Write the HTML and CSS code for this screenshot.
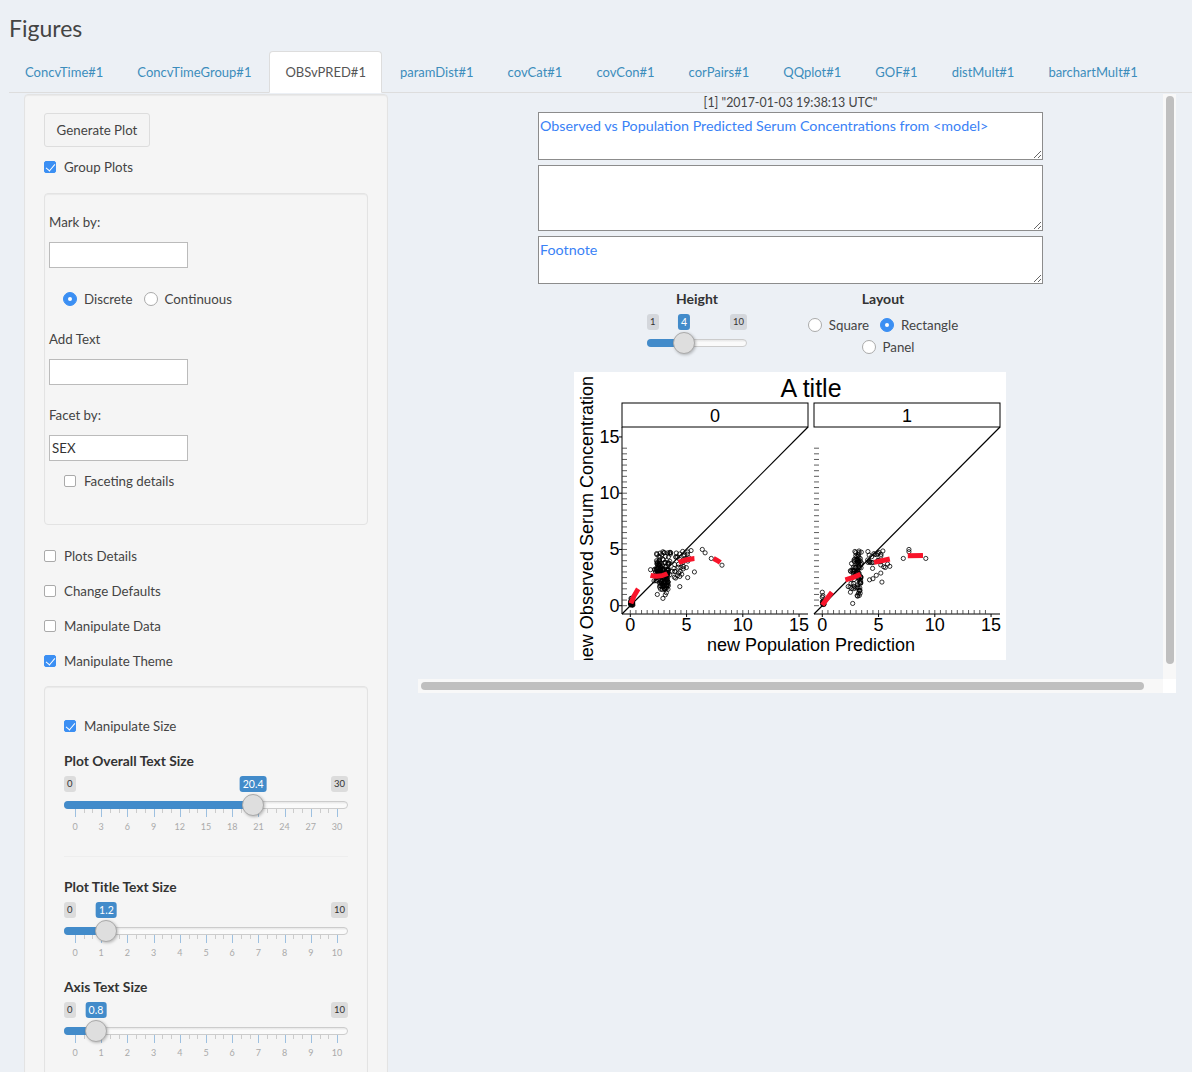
FILE: index.html
```html
<!DOCTYPE html>
<html lang="en">
<head>
    <meta charset="utf-8" />
    <meta name="viewport" content="width=device-width, initial-scale=1.0" />
    <title>Figures</title>
    <link rel="stylesheet" href="styles.css">
</head>
<body>
    <div class="page">
        <h2 class="page-title">Figures</h2>

        <ul class="nav-tabs">
            <li><a href="#">ConcvTime#1</a></li>
            <li><a href="#">ConcvTimeGroup#1</a></li>
            <li class="active"><a href="#">OBSvPRED#1</a></li>
            <li><a href="#">paramDist#1</a></li>
            <li><a href="#">covCat#1</a></li>
            <li><a href="#">covCon#1</a></li>
            <li><a href="#">corPairs#1</a></li>
            <li><a href="#">QQplot#1</a></li>
            <li><a href="#">GOF#1</a></li>
            <li><a href="#">distMult#1</a></li>
            <li><a href="#">barchartMult#1</a></li>
        </ul>

        <div class="tab-content">
            <div class="well sidebar">
                <button class="btn">Generate Plot</button>
                <label class="check group-plots"><input type="checkbox" checked> Group Plots</label>

                <div class="well options-well">
                    <label class="field-label">Mark by:</label>
                    <input class="text-input" type="text">
                    <div class="radio-row mark-type">
                        <label class="check"><input type="radio" name="mark" checked> Discrete</label>
                        <label class="check"><input type="radio" name="mark"> Continuous</label>
                    </div>
                    <label class="field-label add-text">Add Text</label>
                    <input class="text-input" type="text">
                    <label class="field-label facet-by">Facet by:</label>
                    <input class="text-input" type="text" value="SEX">
                    <label class="check facet-details"><input type="checkbox"> Faceting details</label>
                </div>

                <label class="check"><input type="checkbox"> Plots Details</label>
                <label class="check section-check"><input type="checkbox"> Change Defaults</label>
                <label class="check section-check"><input type="checkbox"> Manipulate Data</label>
                <label class="check section-check"><input type="checkbox" checked> Manipulate Theme</label>

                <div class="well theme-well">
                    <label class="check"><input type="checkbox" checked> Manipulate Size</label>

                    <div class="slider-label first">Plot Overall Text Size</div>
                    <div class="irs with-grid" data-min="0" data-max="30" data-value="20.4" data-step="3"></div>
                    <hr class="divider">
                    <div class="slider-label">Plot Title Text Size</div>
                    <div class="irs with-grid" data-min="0" data-max="10" data-value="1.2" data-step="1"></div>
                    <div class="slider-label next">Axis Text Size</div>
                    <div class="irs with-grid" data-min="0" data-max="10" data-value="0.8" data-step="1"></div>
                </div>
            </div>

            <div class="plot-pane">
                <div class="plot-scroll">
                    <pre class="timestamp">[1] "2017-01-03 19:38:13 UTC"</pre>
                    <textarea class="caption short">Observed vs Population Predicted Serum Concentrations from &lt;model&gt;</textarea>
                    <textarea class="caption tall"></textarea>
                    <textarea class="caption short">Footnote</textarea>

                    <div class="plot-controls">
                        <div class="height-col">
                            <div class="control-title">Height</div>
                            <div class="irs" data-min="1" data-max="10" data-value="4"></div>
                        </div>
                        <div class="layout-col">
                            <div class="control-title">Layout</div>
                            <div class="radio-row layout-row">
                                <label class="check"><input type="radio" name="layout"> Square</label>
                                <label class="check"><input type="radio" name="layout" checked> Rectangle</label>
                            </div>
                            <div class="radio-row panel-row">
                                <label class="check"><input type="radio" name="layout"> Panel</label>
                            </div>
                        </div>
                    </div>

                    <svg class="plot" id="plot" width="432" height="288" viewBox="574 372 432 288">
                        <rect x="574" y="372" width="432" height="288" fill="#fff"/>
                        <text class="plot-title" x="811" y="397">A title</text>
                        <text class="axis-title" x="811" y="651">new Population Prediction</text>
                        <text class="axis-title" transform="translate(593 376) rotate(-90)" style="text-anchor:end">new Observed Serum Concentration</text>
                    </svg>
                </div>
                <div class="scroll-track vertical"><div class="scroll-thumb"></div></div>
                <div class="scroll-track horizontal"><div class="scroll-thumb"></div></div>
                <div class="scroll-corner"></div>
            </div>
        </div>
    </div>
    <script src="page.js"></script>
</body>
</html>
```

FILE: styles.css
```css
* {
    box-sizing: border-box;
}

html, body {
    margin: 0;
    padding: 0;
    height: 100%;
    overflow: hidden;
}

body {
    font-family: "Lato", "Open Sans", sans-serif;
    font-size: 13.3px;
    line-height: 20px;
    background-color: #ecf0f5;
    color: #333;
}

.page {
    height: 1072px;
    overflow: hidden;
    padding-left: 9px;
}

.page-title {
    margin: 0;
    height: 51px;
    padding-top: 14px;
    font-size: 23px;
    line-height: 28px;
    font-weight: 400;
    color: #444;
}

.nav-tabs {
    display: flex;
    list-style: none;
    margin: 0;
    padding: 0;
    height: 42px;
    border-bottom: 1px solid #ddd;
    font-size: 13px;
}

.nav-tabs li {
    margin-right: 2px;
}

.nav-tabs a {
    display: block;
    height: 42px;
    padding: 10px 15px;
    border: 1px solid transparent;
    border-radius: 4px 4px 0 0;
    color: #3c8dbc;
    text-decoration: none;
    white-space: nowrap;
}

.nav-tabs .active a {
    background-color: #fff;
    border-color: #ddd #ddd #fff;
    color: #555;
}

.tab-content {
    display: flex;
    align-items: flex-start;
    padding-left: 15px;
    margin-top: 1px;
}

.well {
    background-color: #f5f5f5;
    border: 1px solid #e3e3e3;
    border-radius: 4px;
    box-shadow: inset 0 1px 1px rgba(0, 0, 0, 0.05);
}

.sidebar {
    flex: none;
    width: 364px;
    padding: 18px 19px 19px;
    margin-right: 30px;
}

.btn {
    display: block;
    height: 34px;
    width: 106px;
    padding: 0;
    border: 1px solid #ddd;
    border-radius: 3px;
    background-color: #f4f4f4;
    color: #444;
    font-family: inherit;
    font-size: 13.3px;
}

.check {
    display: flex;
    align-items: center;
    gap: 8px;
    height: 20px;
    white-space: nowrap;
    color: #444;
}

.radio-row .check {
    gap: 7px;
}

.group-plots {
    margin-top: 10px;
}

.section-check {
    margin-top: 15px;
}

.check input {
    appearance: none;
    flex: none;
    margin: 0;
    background-color: #fff;
    border: 1px solid #aaa;
    position: relative;
}

.check input[type="checkbox"] {
    width: 12px;
    height: 12px;
    border-radius: 2px;
}

.check input[type="radio"] {
    width: 14px;
    height: 14px;
    border-radius: 50%;
}

.check input:checked {
    background-color: #3b8ff3;
    border-color: #3b8ff3;
}

.check input[type="checkbox"]:checked::after {
    content: "";
    position: absolute;
    left: 3px;
    top: 0;
    width: 4px;
    height: 8px;
    border: solid #fff;
    border-width: 0 1.5px 1.5px 0;
    transform: rotate(40deg);
}

.check input[type="radio"]:checked::after {
    content: "";
    position: absolute;
    left: 4px;
    top: 4px;
    width: 4px;
    height: 4px;
    border-radius: 50%;
    background-color: #fff;
}

.options-well {
    width: 324px;
    height: 332px;
    margin: 16px 0 21px;
    padding: 18px 4px 0;
}

.field-label {
    display: block;
    height: 20px;
    color: #444;
}

.text-input {
    display: block;
    width: 139px;
    height: 26px;
    margin-top: 10px;
    padding: 0 2px;
    border: 1px solid #bbb;
    background-color: #fff;
    color: #333;
    font-family: inherit;
    font-size: 13.3px;
}

.radio-row {
    display: flex;
}

.mark-type {
    gap: 11px;
    margin: 21px 0 0 14px;
}

.add-text {
    margin-top: 20px;
}

.facet-by {
    margin-top: 20px;
}

.facet-details {
    margin: 10px 0 0 15px;
}

.theme-well {
    width: 324px;
    height: 500px;
    margin-top: 15px;
    padding: 29px 19px 0;
}

.slider-label {
    height: 20px;
    margin-bottom: 5px;
    font-size: 13.8px;
    font-weight: 700;
    color: #333;
}

.slider-label.first {
    margin-top: 15px;
}

.slider-label.next {
    margin-top: 15px;
}

.divider {
    height: 1px;
    margin: 20px 0;
    border: 0;
    background-color: #eee;
}

/* range slider */
.irs {
    position: relative;
    height: 40px;
    font-size: 11px;
    line-height: 16px;
}

.irs.with-grid {
    height: 60px;
}

.irs-min, .irs-max, .irs-value {
    position: absolute;
    top: 0;
    height: 16px;
    padding: 0 3px;
    border-radius: 3px;
    background-color: rgba(0, 0, 0, 0.1);
    color: #333;
    font-size: 9.5px;
}

.irs-min {
    left: 0;
}

.irs-max {
    right: 0;
}

.irs-value {
    transform: translateX(-50%);
    background-color: #428bca;
    color: #fff;
    font-size: 10.5px;
}

.irs-track {
    position: absolute;
    top: 25px;
    left: 0;
    right: 0;
    height: 8px;
    border: 1px solid #ccc;
    border-radius: 8px;
    background: linear-gradient(#e6e6e6, #fafafa 40%);
}

.irs-bar {
    position: absolute;
    top: 25px;
    left: 0;
    height: 8px;
    border-radius: 8px 0 0 8px;
    background-color: #428bca;
}

.irs-handle {
    position: absolute;
    top: 18px;
    width: 22px;
    height: 22px;
    margin-left: -11px;
    border: 1px solid #aaa;
    border-radius: 50%;
    background-color: #dedede;
    box-shadow: 1px 1px 3px rgba(0, 0, 0, 0.25);
}

.irs-tick {
    position: absolute;
    top: 33px;
    width: 1px;
    height: 4px;
    background-color: #ccc;
}

.irs-tick.major {
    height: 8px;
    background-color: #9dc0e0;
}

.irs-tick-label {
    position: absolute;
    top: 44px;
    transform: translateX(-50%);
    font-size: 9px;
    line-height: 14px;
    color: #aaa;
}

/* plot pane */
.plot-pane {
    flex: none;
    display: grid;
    grid-template-columns: 745px 13px;
    grid-template-rows: 585px 14px;
}

.plot-scroll {
    display: flex;
    flex-direction: column;
    align-items: center;
    overflow: hidden;
}

.timestamp {
    margin: 0;
    height: 16px;
    font-family: inherit;
    font-size: 12.4px;
    line-height: 17px;
    color: #444;
}

.caption {
    display: block;
    flex: none;
    width: 505px;
    margin: 5px 0 0;
    padding: 3px 1px 2px;
    border: 1px solid #8c8c8c;
    background-color: #fff;
    color: #3a82f6;
    font-family: inherit;
    font-size: 14.3px;
    line-height: 20px;
}

.timestamp + .caption {
    margin-top: 2px;
}

.caption.short {
    height: 48px;
}

.caption.tall {
    height: 66px;
}

.plot-controls {
    display: flex;
    flex: none;
    width: 505px;
    height: 83px;
    margin-top: 5px;
    padding-left: 109px;
    gap: 56px;
}

.height-col {
    width: 100px;
}

.layout-col {
    width: 160px;
}

.control-title {
    height: 25px;
    text-align: center;
    font-size: 14px;
    font-weight: 700;
    color: #333;
}

.layout-row {
    justify-content: center;
    gap: 11px;
    margin-top: 1px;
}

.panel-row {
    justify-content: center;
    margin: 2px 0 0 10px;
}

.plot {
    display: block;
    flex: none;
    margin-left: -1px;
}

.plot text {
    font-family: "Liberation Sans", Arial, sans-serif;
    fill: #000;
    text-anchor: middle;
}

.plot-title {
    font-size: 25px;
}

.axis-title {
    font-size: 18px;
}

.plot .tick-label {
    font-size: 18px;
}

.plot .tick-label.y {
    text-anchor: end;
}

.scroll-track {
    background-color: #f8f8f8;
    display: flex;
}

.scroll-track.vertical {
    padding: 2px 2px 15px 3px;
}

.scroll-track.horizontal {
    padding: 3px 19px 3px 3px;
}

.scroll-thumb {
    flex: 1;
    border-radius: 8px;
    background-color: #bfbfbf;
}

.scroll-corner {
    background-color: #fff;
}
```

FILE: page.js
```js
// builds the sliders and the observed vs predicted plot
const SVG_NS = "http://www.w3.org/2000/svg";

function el(parent, className, text) {
    const div = document.createElement("div");
    div.className = className;
    if (text !== undefined) div.textContent = text;
    parent.appendChild(div);
    return div;
}

document.querySelectorAll(".irs").forEach((irs) => {
    const min = Number(irs.dataset.min);
    const max = Number(irs.dataset.max);
    const value = Number(irs.dataset.value);
    const step = Number(irs.dataset.step);
    const inner = irs.offsetWidth - 22;
    const pos = (v) => 11 + ((v - min) / (max - min)) * inner;

    el(irs, "irs-min", min);
    el(irs, "irs-max", max);
    el(irs, "irs-track");
    el(irs, "irs-bar").style.width = pos(value) + "px";
    if (step) {
        const count = (max - min) / step;
        for (let i = 0; i <= count * 3; i++) {
            const x = 11 + (i / (count * 3)) * inner;
            el(irs, i % 3 === 0 ? "irs-tick major" : "irs-tick").style.left = x + "px";
        }
        for (let i = 0; i <= count; i++) {
            el(irs, "irs-tick-label", min + i * step).style.left = pos(min + i * step) + "px";
        }
    }
    el(irs, "irs-value", value).style.left = pos(value) + "px";
    el(irs, "irs-handle").style.left = pos(value) + "px";
});

const plot = document.getElementById("plot");

function svg(name, attrs, text) {
    const node = document.createElementNS(SVG_NS, name);
    for (const key in attrs) node.setAttribute(key, attrs[key]);
    if (text !== undefined) node.textContent = text;
    plot.appendChild(node);
    return node;
}

let seed = 20170103;
function rnd() {
    seed = (seed * 1664525 + 1013904223) % 4294967296;
    return seed / 4294967296;
}
function between(a, b) {
    return a + rnd() * (b - a);
}

function cloud(n, x0, x1, y0, y1) {
    const out = [];
    for (let i = 0; i < n; i++) {
        out.push([between(x0, x1), between(y0, y1)]);
    }
    return out;
}

const panels = [
    {
        left: 622,
        right: 808,
        zero: 630.3,
        label: "0",
        points: [
            ...cloud(18, 0, 0.25, 0, 0.35),
            ...cloud(5, 0, 0.2, 0.3, 0.7),
            ...cloud(80, 2.1, 3.4, 1.8, 3.4),
            ...cloud(30, 2.6, 3.4, 0.9, 2.2),
            ...cloud(45, 2.1, 3.5, 3.2, 4.8),
            ...cloud(30, 3.5, 4.8, 2.4, 4.9),
            ...cloud(8, 4.4, 5.5, 3.2, 4.9),
            [1.8, 3.2], [2.4, 1], [2.9, 0.65], [4.4, 1.7], [4.4, 2.6], [5.1, 2.5], [5.7, 3],
            [6.4, 5], [6.65, 4.7], [7.2, 4.2], [8.15, 3.6], [5.4, 4.9],
        ],
        lines: ["M0.05 0.2 Q0.3 0.9 0.7 1.5", "M1.8 2.7 Q2.6 2.5 3.3 2.85", "M4.3 3.85 Q5 4.15 5.7 4.2", "M7.4 4.2 Q7.8 4 8 3.85"],
    },
    {
        left: 814,
        right: 1000,
        zero: 822.3,
        label: "1",
        points: [
            ...cloud(10, 0, 0.2, 0, 0.5),
            [0, 1.2], [0.05, 0.9], [0, 0.75],
            ...cloud(45, 3, 3.45, 0.8, 4.2),
            ...cloud(25, 2.4, 3.2, 1.5, 3.8),
            ...cloud(18, 2.8, 3.5, 3.8, 4.95),
            ...cloud(25, 4, 5.5, 3.3, 4.9),
            [2.7, 0.2], [2.3, 1.7], [2.5, 1.2], [4.2, 2.3], [4.5, 2.4], [4.8, 2.7], [5.2, 2.9],
            [5.3, 2.1], [5.6, 3.4], [6, 3.5], [5.8, 3.7], [7.2, 4.2], [7.7, 5], [7.7, 4.8], [9.2, 4.2],
        ],
        lines: ["M0 0.05 Q0.4 0.6 0.85 1.2", "M2.05 2.3 Q2.8 2.5 3.4 2.8", "M4.6 3.85 Q5.3 4 6 4.15", "M7.6 4.45 L8.95 4.47"],
    },
];

const TOP = 427;
const BOTTOM = 614;
const UNIT = 11.25;
const yPos = (v) => 605.7 - v * UNIT;

panels.forEach((panel, index) => {
    const xPos = (v) => panel.zero + v * UNIT;

    svg("rect", { x: panel.left, y: 403, width: panel.right - panel.left, height: 24, fill: "#fff", stroke: "#000", "stroke-width": 1 });
    svg("text", { x: (panel.left + panel.right) / 2, y: 421.5, class: "tick-label" }, panel.label);

    svg("path", { d: `M${panel.left} ${TOP}V${BOTTOM}H${panel.right}`, fill: "none", stroke: index === 0 ? "#000" : "none" });
    if (index === 1) {
        svg("path", { d: `M${panel.left} ${BOTTOM}H${panel.right}`, fill: "none", stroke: "#000" });
    }
    svg("line", { x1: panel.left, y1: BOTTOM, x2: panel.right, y2: TOP, stroke: "#000", "stroke-width": 1.2 });

    // rug style minor ticks
    let ticks = "";
    for (let v = 0; v <= 14; v += 0.5) {
        ticks += `M${panel.left} ${yPos(v)}h5`;
    }
    for (let v = 0; v <= 14.5; v += 0.5) {
        ticks += `M${xPos(v)} ${BOTTOM}v-4`;
    }
    svg("path", { d: ticks, stroke: "#333", "stroke-width": 0.8, fill: "none" });

    [0, 5, 10, 15].forEach((v) => {
        svg("text", { x: xPos(v), y: 631, class: "tick-label" }, v);
        svg("line", { x1: xPos(v), y1: BOTTOM, x2: xPos(v), y2: 617, stroke: "#000" });
        if (index === 0) {
            svg("text", { x: 619.5, y: yPos(v) + 6, class: "tick-label y" }, v);
            svg("line", { x1: 619, y1: yPos(v), x2: panel.left, y2: yPos(v), stroke: "#000" });
        }
    });

    panel.points.forEach(([x, y]) => {
        svg("circle", { cx: xPos(x), cy: yPos(y), r: 2.1, fill: "none", stroke: "#000", "stroke-width": 0.8 });
    });

    panel.lines.forEach((line) => {
        const d = line.replace(/(-?[\d.]+) (-?[\d.]+)/g, (m, x, y) => `${xPos(Number(x))} ${yPos(Number(y))}`);
        svg("path", { d, fill: "none", stroke: "#f8142a", "stroke-width": 5 });
    });
});
```
